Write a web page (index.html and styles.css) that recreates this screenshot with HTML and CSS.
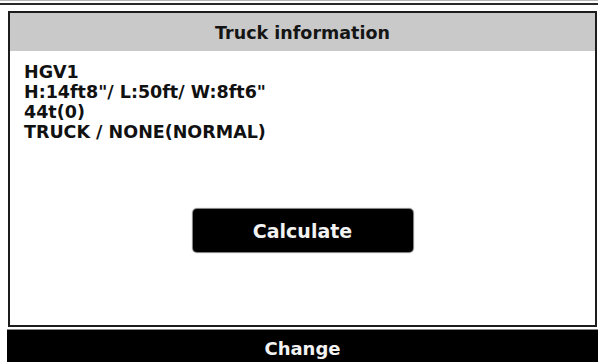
FILE: index.html
```html
<!DOCTYPE html>
<html>
<head>
<meta charset="utf-8">
<link rel="stylesheet" href="styles.css">
</head>
<body>
<div class="topbar"></div>
<div class="panel">
  <div class="header">Truck information</div>
  <div class="info">
    <div>HGV1</div>
    <div>H:14ft8"/ L:50ft/ W:8ft6"</div>
    <div>44t(0)</div>
    <div>TRUCK / NONE(NORMAL)</div>
  </div>
  <div class="actions">
    <div class="btn">Calculate</div>
  </div>
</div>
<div class="bottombar">Change</div>
</body>
</html>
```

FILE: styles.css
```css
html, body {
  margin: 0;
  padding: 0;
  background: #fff;
  width: 598px;
  height: 362px;
  overflow: hidden;
  font-family: "DejaVu Sans", Verdana, sans-serif;
  font-weight: bold;
  color: #111;
}
.topbar {
  height: 2px;
  border-top: 1px solid #b5b5b5;
  border-bottom: 2px solid #2a2a2a;
}
.panel {
  box-sizing: border-box;
  margin: 6px 1px 0 8px;
  height: 316px;
  border: 2px solid #1c1c1c;
  display: flex;
  flex-direction: column;
}
.header {
  height: 38px;
  background: #c9c9c9;
  display: flex;
  align-items: center;
  justify-content: center;
  font-size: 17.5px;
  color: #151515;
  padding-top: 2px;
  box-sizing: border-box;
}
.info {
  padding: 11px 0 0 14px;
  font-size: 17.5px;
  line-height: 20px;
}
.actions {
  display: flex;
  justify-content: center;
  margin-top: 67px;
}
.btn {
  width: 220px;
  height: 43px;
  background: #000;
  border-radius: 4px;
  color: #f2f2f2;
  font-size: 19px;
  display: flex;
  align-items: center;
  justify-content: center;
  box-shadow: 0 0 1px 1px #777;
}
.bottombar {
  margin: 2px 0 0 7px;
  height: 40px;
  background: #000;
  border-top: 1px solid #888;
  color: #f2f2f2;
  font-size: 18px;
  display: flex;
  justify-content: center;
  padding-top: 8px;
  box-sizing: border-box;
}
```
